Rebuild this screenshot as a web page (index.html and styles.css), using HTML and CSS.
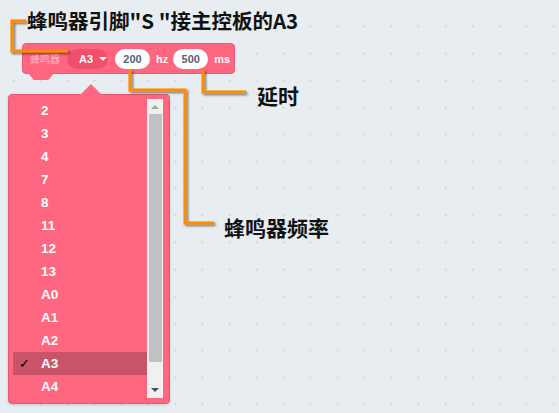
FILE: index.html
```html
<!DOCTYPE html>
<html>
<head>
<meta charset="utf-8">
<link rel="stylesheet" href="styles.css">
</head>
<body>
<div class="canvas">
  <div class="title">蜂鸣器引脚"S "接主控板的A3</div>

  <div class="block">
    <span class="label">蜂鸣器</span>
    <span class="drop">A3 <span class="caret"></span></span>
    <span class="pill">200</span>
    <span class="unit">hz</span>
    <span class="pill">500</span>
    <span class="unit">ms</span>
  </div>

  <div class="menu">
    <div class="list">
      <div class="item">2</div>
      <div class="item">3</div>
      <div class="item">4</div>
      <div class="item">7</div>
      <div class="item">8</div>
      <div class="item">11</div>
      <div class="item">12</div>
      <div class="item">13</div>
      <div class="item">A0</div>
      <div class="item">A1</div>
      <div class="item">A2</div>
      <div class="item selected"><span class="check">✓</span>A3</div>
      <div class="item">A4</div>
    </div>
    <div class="scroll">
      <div class="arrow up"></div>
      <div class="thumb"></div>
      <div class="arrow down"></div>
    </div>
  </div>

  <svg class="lines" width="559" height="413" viewBox="0 0 559 413">
    <defs>
      <filter id="sh" x="-10%" y="-10%" width="130%" height="130%">
        <feDropShadow dx="1.5" dy="1.5" stdDeviation="1.2" flood-color="#000" flood-opacity="0.55"/>
      </filter>
    </defs>
    <g fill="none" stroke="#ff8c00" stroke-width="3" stroke-linejoin="miter" filter="url(#sh)">
      <polyline points="26,21 12,21 12,51 68,51"/>
      <polyline points="130,70 130,90 185,90 185,223 214,223"/>
      <polyline points="203,70 203,92 246,92"/>
    </g>
  </svg>

  <div class="note delay">延时</div>
  <div class="note freq">蜂鸣器频率</div>
</div>
</body>
</html>
```

FILE: styles.css
```css
html, body {
  margin: 0;
  padding: 0;
}
body {
  width: 559px;
  height: 413px;
  overflow: hidden;
  background-color: #e8edf1;
  background-image: radial-gradient(circle, #d6dbe0 1px, transparent 1.3px);
  background-size: 27px 27px;
  background-position: 0 13px;
  font-family: "Liberation Sans", Arial, sans-serif;
}
.canvas {
  position: relative;
  width: 559px;
  height: 413px;
}
.title {
  position: absolute;
  left: 27px;
  top: 5px;
  font-family: "Noto Sans CJK SC", "Noto Sans", sans-serif;
  font-weight: 700;
  font-size: 20.5px;
  line-height: 30px;
  color: #111;
  white-space: nowrap;
}
.block {
  position: absolute;
  left: 22px;
  top: 43px;
  width: 213px;
  height: 31px;
  box-sizing: border-box;
  background: #ff6680;
  border: 1px solid #ee5b74;
  border-radius: 4px;
  display: flex;
  align-items: center;
  padding-left: 7px;
  font-weight: 700;
  font-size: 11px;
  color: #fff;
  white-space: nowrap;
}
.block::after {
  content: "";
  position: absolute;
  left: 5px;
  top: 29px;
  width: 26px;
  height: 7px;
  background: #ff6680;
  clip-path: polygon(0 0, 100% 0, 78% 100%, 22% 100%);
}
.label {
  flex: none;
  width: 28px;
  font-family: "Noto Sans CJK SC", sans-serif;
  font-weight: 400;
  font-size: 10px;
  color: rgba(255,255,255,0.55);
  margin-right: 9px;
}
.drop {
  flex: none;
  width: 41px;
  box-sizing: border-box;
  display: flex;
  align-items: center;
  gap: 6px;
  height: 20px;
  padding-left: 12px;
  border-radius: 10px;
  background: #f24f6c;
  font-size: 11px;
  margin-right: 7px;
}
.caret {
  width: 0;
  height: 0;
  border-left: 4px solid transparent;
  border-right: 4px solid transparent;
  border-top: 4px solid #fff;
}
.pill {
  flex: none;
  height: 20px;
  width: 35px;
  box-sizing: border-box;
  border-radius: 10px;
  background: #fff;
  color: #575e75;
  display: flex;
  align-items: center;
  justify-content: center;
  font-size: 11px;
}
.unit {
  flex: none;
  margin: 0 5px 0 6px;
}
.menu {
  position: absolute;
  left: 8px;
  top: 94px;
  width: 162px;
  height: 310px;
  box-sizing: border-box;
  background: #ff6680;
  border: 1px solid #e45a72;
  border-radius: 4px;
  box-shadow: 0 1px 3px rgba(0,0,0,0.15);
  display: flex;
  padding: 4px 6px 5px 4px;
}
.menu::before {
  content: "";
  position: absolute;
  left: 71px;
  top: -11px;
  width: 22px;
  height: 11px;
  background: #ff6680;
  clip-path: polygon(50% 0, 100% 100%, 0 100%);
}
.list {
  flex: 1;
  display: flex;
  flex-direction: column;
}
.item {
  position: relative;
  height: 23px;
  line-height: 23px;
  padding-left: 28px;
  font-weight: 700;
  font-size: 13.5px;
  color: #fff;
}
.item.selected {
  background: #c95369;
}
.check {
  position: absolute;
  left: 6px;
  top: 0;
  color: #000;
  font-family: "DejaVu Sans", sans-serif;
  font-weight: 400;
  font-size: 13px;
}
.scroll {
  width: 16px;
  background: #f0f0f0;
  display: flex;
  flex-direction: column;
  align-items: center;
}
.arrow {
  width: 0;
  height: 0;
  border-left: 4px solid transparent;
  border-right: 4px solid transparent;
}
.arrow.up {
  margin: 6px 0 5px;
  border-bottom: 4px solid #a3a3a3;
}
.arrow.down {
  margin: auto 0 6px;
  border-top: 4px solid #505050;
}
.thumb {
  width: 13px;
  height: 248px;
  background: #c1c1c1;
}
.lines {
  position: absolute;
  left: 0;
  top: 0;
  pointer-events: none;
}
.note {
  position: absolute;
  font-family: "Noto Sans CJK SC", sans-serif;
  font-weight: 700;
  font-size: 21px;
  line-height: 28px;
  color: #111;
  white-space: nowrap;
}
.delay {
  left: 257px;
  top: 81px;
}
.freq {
  left: 224px;
  top: 213px;
}
```
